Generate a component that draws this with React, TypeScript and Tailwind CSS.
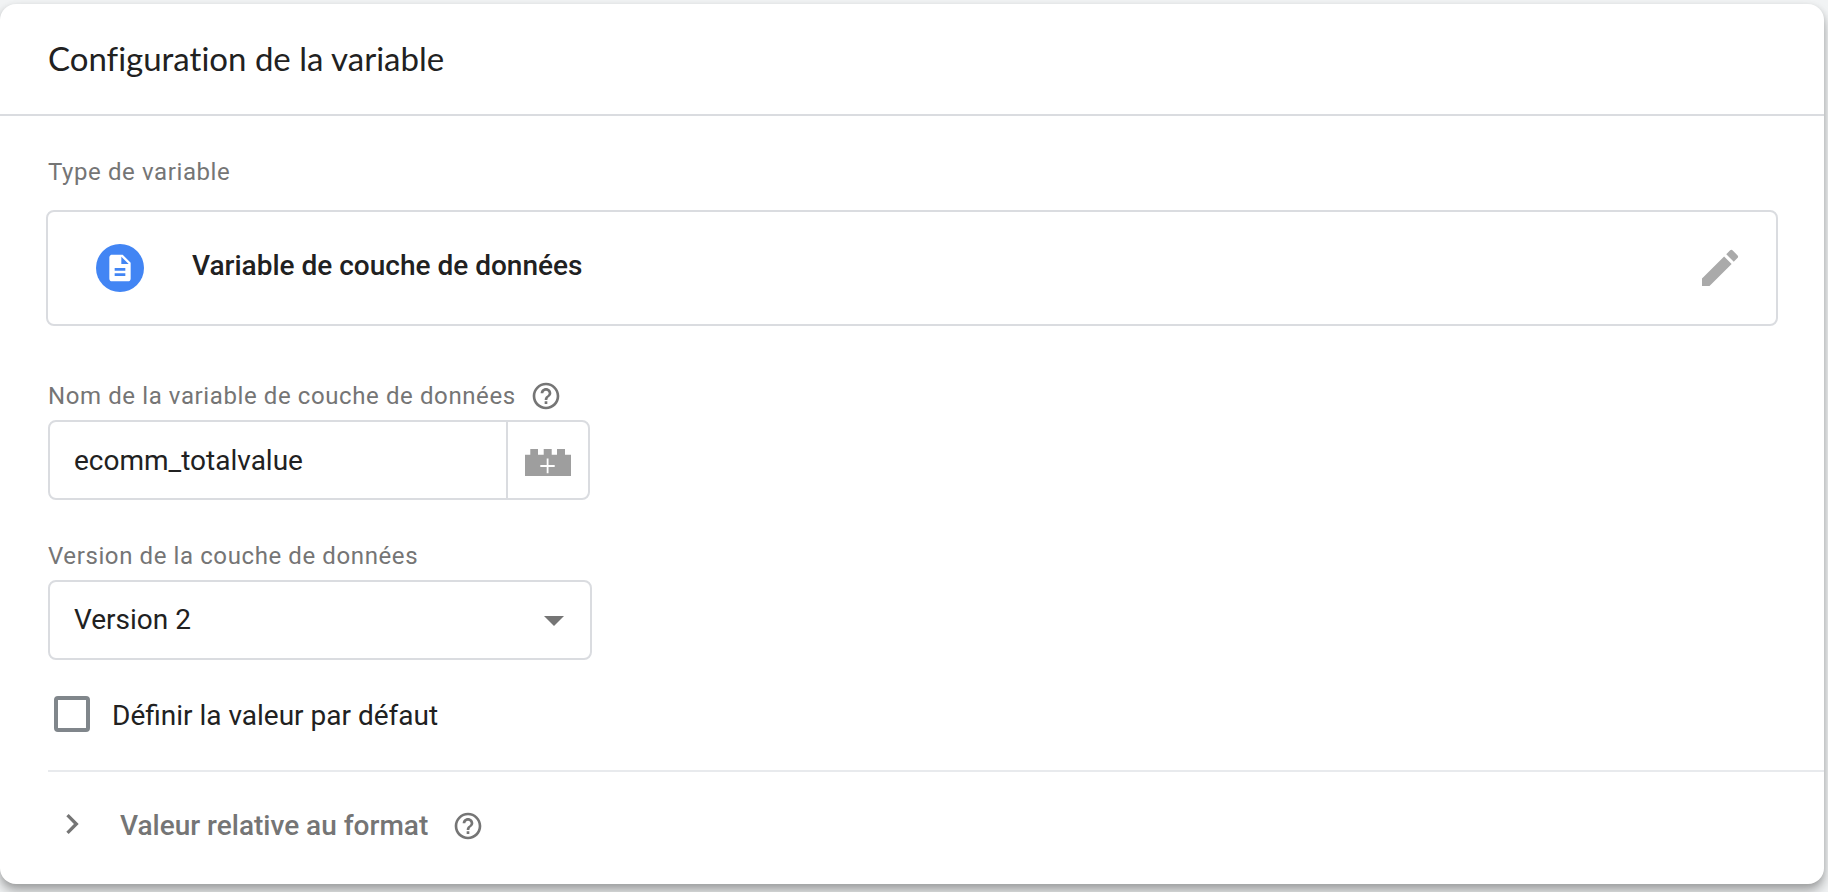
import { useState } from 'react'
import type { ReactNode } from 'react'
import { MdArrowDropDown, MdChevronRight, MdDescription, MdEdit, MdHelpOutline } from 'react-icons/md'

interface FieldLabelProps {
  htmlFor: string
  children: ReactNode
}

function FieldLabel({ htmlFor, children }: FieldLabelProps) {
  return (
    <label htmlFor={htmlFor} className="text-2xl leading-8 tracking-wide text-[#757575]">
      {children}
    </label>
  )
}

function HelpButton({ label }: { label: string }) {
  return (
    <button type="button" aria-label={label} className="text-[#757575]">
      <MdHelpOutline className="size-8" />
    </button>
  )
}

function BrickIcon() {
  return (
    <svg viewBox="0 0 46 27" className="h-[27px] w-[46px]" aria-hidden="true">
      <path
        fill="#9e9e9e"
        d="M0 5.7h5.3V0H13v5.7h5.7V0h8v5.7H32V0h8v5.7h6V27H0z"
      />
      <path stroke="#fff" strokeWidth="1.8" d="M15.3 17h14.4M22.6 9.5v14.8" />
    </svg>
  )
}

export default function App() {
  const [name, setName] = useState('ecomm_totalvalue')
  const [version, setVersion] = useState('2')
  const [hasDefault, setHasDefault] = useState(false)

  return (
    <div className="min-h-screen overflow-hidden bg-[#f1f3f4] pt-1 pr-1 pb-2 font-['Roboto',sans-serif] text-[#212121]">
      <main className="rounded-2xl bg-white shadow-[0_8px_12px_rgba(0,0,0,0.28),0_2px_6px_rgba(0,0,0,0.12)]">
        <header className="border-b-2 border-[#dadce0] px-12 pt-[34px] pb-9">
          <h1 className="font-['Lato',sans-serif] text-[33px] leading-10 [font-variant-ligatures:none]">
            Configuration de la variable
          </h1>
        </header>

        <div className="pt-10 pb-10">
          <section className="pr-[46px] pl-[46px]">
            <h2 className="pl-0.5 text-2xl leading-8 tracking-wide text-[#757575]">Type de variable</h2>
            <div className="mt-[22px] flex h-[116px] items-center rounded-lg border-2 border-[#dadce0] px-12">
              <span className="flex size-12 items-center justify-center rounded-full bg-[#4285f4] text-white">
                <MdDescription className="size-8" />
              </span>
              <span className="ml-12 flex-1 pb-1 text-[28px] leading-8 font-medium">
                Variable de couche de données
              </span>
              <button type="button" aria-label="Modifier" className="-mr-4 text-[#aaaaaa]">
                <MdEdit className="size-12" />
              </button>
            </div>
          </section>

          <form className="mt-[54px] pl-12">
            <div className="flex items-center gap-3.5">
              <FieldLabel htmlFor="name">Nom de la variable de couche de données</FieldLabel>
              <HelpButton label="Aide sur le nom de la variable" />
            </div>
            <div className="mt-2 flex h-20 w-[542px] rounded-lg border-2 border-[#dadce0]">
              <input
                id="name"
                type="text"
                value={name}
                onChange={(e) => setName(e.target.value)}
                className="min-w-0 flex-1 px-6 pt-0.5 text-[28px] outline-none"
              />
              <button
                type="button"
                aria-label="Insérer une variable"
                className="flex w-[82px] items-center justify-center border-l-2 border-[#dadce0] pt-1"
              >
                <BrickIcon />
              </button>
            </div>

            <div className="mt-10 flex">
              <FieldLabel htmlFor="version">Version de la couche de données</FieldLabel>
            </div>
            <div className="relative mt-2 w-[544px]">
              <select
                id="version"
                value={version}
                onChange={(e) => setVersion(e.target.value)}
                className="h-20 w-full appearance-none rounded-lg border-2 border-[#dadce0] bg-white px-6 text-[28px] outline-none"
              >
                <option value="1">Version 1</option>
                <option value="2">Version 2</option>
              </select>
              <MdArrowDropDown className="pointer-events-none absolute top-4 right-3.5 size-12 text-[#757575]" />
            </div>

            <div className="mt-9 flex items-center pl-1.5">
              <input
                id="default"
                type="checkbox"
                checked={hasDefault}
                onChange={(e) => setHasDefault(e.target.checked)}
                className="size-9 appearance-none rounded-sm border-4 border-[#80868b] checked:bg-[#80868b]"
              />
              <label htmlFor="default" className="pt-1 pl-[22px] text-[28px] leading-8">
                Définir la valeur par défaut
              </label>
            </div>

            <div className="mt-[38px] flex items-center border-t-2 border-[#e8eaed] pt-8">
              <button type="button" className="flex items-center pl-1 text-[28px] font-medium text-[#757575]">
                <MdChevronRight className="size-10" />
                <span className="pt-1 pl-7 leading-9">Valeur relative au format</span>
              </button>
              <span className="flex pt-1 pl-6">
                <HelpButton label="Aide sur la valeur relative au format" />
              </span>
            </div>
          </form>
        </div>
      </main>
    </div>
  )
}
